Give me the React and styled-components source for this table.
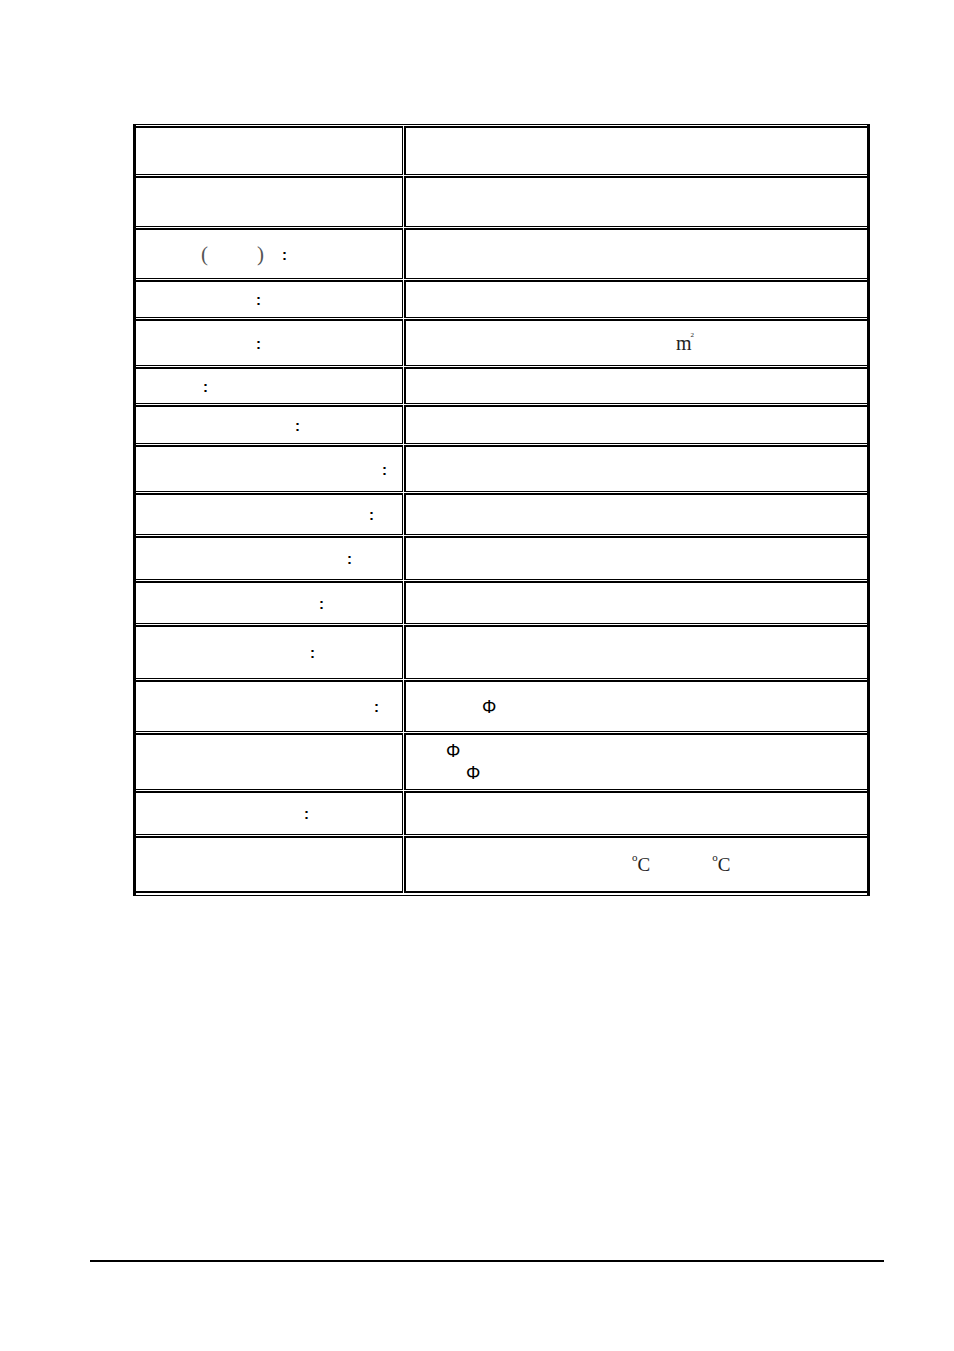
import React from "react";
import styled, { createGlobalStyle } from "styled-components";

const Global = createGlobalStyle`
  html, body { margin: 0; padding: 0; background: #fff; }
  body { font-family: "Liberation Sans", Arial, sans-serif; color: #000; }
`;

const Page = styled.div`
  width: 954px;
  min-height: 1351px;
  box-sizing: border-box;
  padding-top: 124px;
  display: flex;
  flex-direction: column;
`;

const Table = styled.div`
  width: 737px;
  box-sizing: border-box;
  margin-left: 133px;
  border-top: 1px solid #000;
  border-bottom: 1px solid #000;
  border-left: 3px solid #000;
  border-right: 3px solid #000;
  padding: 1px 0 2px;
  display: flex;
  flex-direction: column;
  gap: 1px;
`;

const Row = styled.div`
  display: grid;
  grid-template-columns: 267px 463px;
  column-gap: 1px;
  height: ${(p) => p.$h}px;
`;

const Cell = styled.div`
  box-sizing: border-box;
  border-top: 2px solid #000;
  border-bottom: ${(p) => (p.$last ? 2 : 1)}px solid #000;
  padding-left: ${(p) => p.$pad || 0}px;
  display: flex;
  flex-direction: column;
  justify-content: center;
  font-size: 16px;
`;

const LeftCell = styled(Cell)`
  border-right: 1px solid #000;
`;

const RightCell = styled(Cell)`
  border-left: 2px solid #000;
`;

const Line = styled.div`
  display: flex;
  align-items: center;
  height: 22px;
  padding-left: ${(p) => p.$pad || 0}px;
  white-space: pre;
`;

const Gap = styled.span`
  display: inline-block;
  width: ${(p) => p.$w}px;
`;

const Colon = styled.span`
  font-family: "Liberation Sans", Arial, sans-serif;
  font-weight: bold;
  font-size: 15px;
  line-height: 1;
`;

const Paren = styled.span`
  font-family: "Liberation Serif", "Times New Roman", serif;
  font-size: 21px;
  color: #555;
  line-height: 1;
`;

const Phi = styled.span`
  font-family: "Liberation Sans", Arial, sans-serif;
  font-size: 18px;
  line-height: 1;
`;

const Unit = styled.span`
  font-family: "Liberation Serif", "Times New Roman", serif;
  font-size: ${(p) => p.$size || 20}px;
  color: #222;
  line-height: 1;
  display: inline-flex;
  align-items: flex-start;
`;

const Sup = styled.span`
  font-size: 7px;
  margin-top: -1px;
  margin-left: -1px;
`;

const Deg = styled.span`
  font-size: 11px;
  margin-top: -3px;
`;

const Rule = styled.div`
  margin-left: 90px;
  margin-top: 364px;
  width: 794px;
  height: 2px;
  background: #000;
`;

const ColonCell = ({ pad }) => (
  <LeftCell $pad={pad}>
    <Line>
      <Colon>:</Colon>
    </Line>
  </LeftCell>
);

const Celsius = () => (
  <Unit $size={19}>
    <Deg>o</Deg>C
  </Unit>
);

export default function App() {
  return (
    <>
      <Global />
      <Page>
        <Table>
          <Row $h={49}>
            <LeftCell />
            <RightCell />
          </Row>
          <Row $h={51}>
            <LeftCell />
            <RightCell />
          </Row>
          <Row $h={51}>
            <LeftCell $pad={65}>
              <Line>
                <Paren>(</Paren>
                <Gap $w={49} />
                <Paren>)</Paren>
                <Gap $w={18} />
                <Colon>:</Colon>
              </Line>
            </LeftCell>
            <RightCell />
          </Row>
          <Row $h={38}>
            <ColonCell pad={120} />
            <RightCell />
          </Row>
          <Row $h={47}>
            <ColonCell pad={120} />
            <RightCell $pad={270}>
              <Line>
                <Unit>
                  m<Sup>2</Sup>
                </Unit>
              </Line>
            </RightCell>
          </Row>
          <Row $h={37}>
            <ColonCell pad={67} />
            <RightCell />
          </Row>
          <Row $h={39}>
            <ColonCell pad={159} />
            <RightCell />
          </Row>
          <Row $h={47}>
            <ColonCell pad={246} />
            <RightCell />
          </Row>
          <Row $h={42}>
            <ColonCell pad={233} />
            <RightCell />
          </Row>
          <Row $h={44}>
            <ColonCell pad={211} />
            <RightCell />
          </Row>
          <Row $h={43}>
            <ColonCell pad={183} />
            <RightCell />
          </Row>
          <Row $h={54}>
            <ColonCell pad={174} />
            <RightCell />
          </Row>
          <Row $h={52}>
            <ColonCell pad={238} />
            <RightCell $pad={76}>
              <Line>
                <Phi>Φ</Phi>
              </Line>
            </RightCell>
          </Row>
          <Row $h={57}>
            <LeftCell />
            <RightCell>
              <Line $pad={40}>
                <Phi>Φ</Phi>
              </Line>
              <Line $pad={60}>
                <Phi>Φ</Phi>
              </Line>
            </RightCell>
          </Row>
          <Row $h={44}>
            <ColonCell pad={168} />
            <RightCell />
          </Row>
          <Row $h={57}>
            <LeftCell $last />
            <RightCell $last $pad={226}>
              <Line>
                <Celsius />
                <Gap $w={62} />
                <Celsius />
              </Line>
            </RightCell>
          </Row>
        </Table>
        <Rule />
      </Page>
    </>
  );
}
